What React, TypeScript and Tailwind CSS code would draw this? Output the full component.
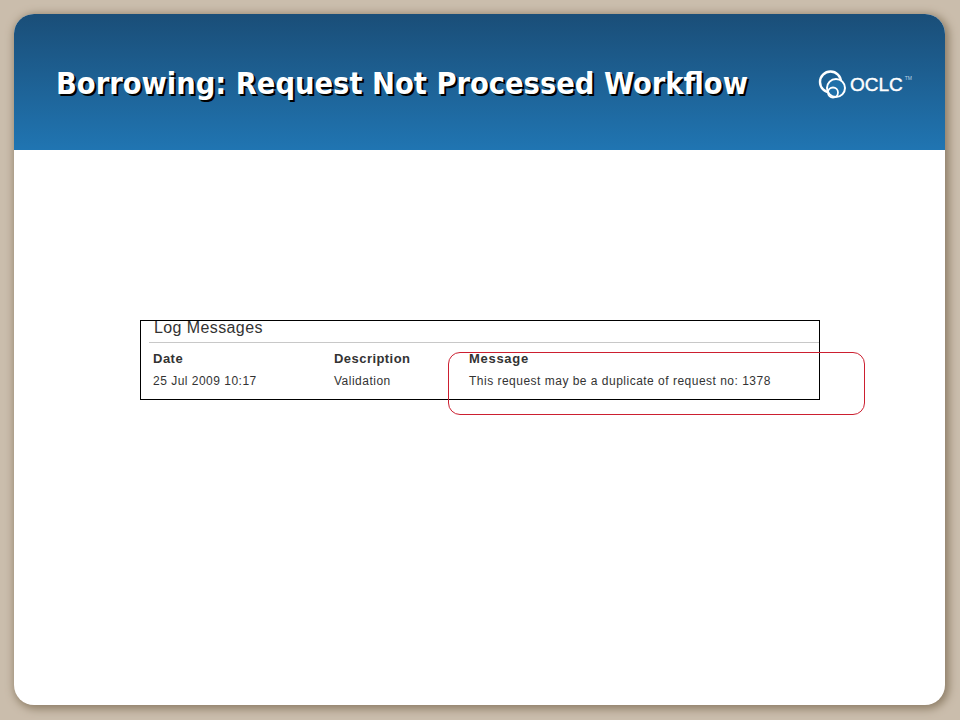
export default function App() {
  return (
    <div className="w-[960px] h-[720px] bg-[#cabdac] pt-[14px] pl-[14px] overflow-hidden">
      <div className="w-[931px] h-[691px] rounded-[20px] bg-white overflow-hidden shadow-[2px_2px_9px_2px_#8f7f68] flex flex-col">
        <header className="h-[136px] shrink-0 bg-gradient-to-b from-[#1a4e78] to-[#2075b2] flex items-start pl-[42px] pr-[33px]">
          <h1 className="mt-[50px] text-[30.45px] leading-[40px] font-bold text-white whitespace-nowrap font-['DejaVu_Sans',sans-serif] [font-stretch:condensed] [text-shadow:2px_2px_0_#000]">
            Borrowing: Request Not Processed Workflow
          </h1>
          <div className="ml-auto mt-[55px] flex items-center gap-[2px]">
            <svg width="30" height="30" viewBox="0 0 30 30" fill="none" stroke="white">
              <circle cx="12.5" cy="13" r="10.5" strokeWidth="2.4" />
              <circle cx="18" cy="19" r="9" strokeWidth="2" fill="#2070a9" />
              <circle cx="15" cy="23.5" r="5" strokeWidth="1.8" />
            </svg>
            <span className="text-[19px] leading-none text-white font-['Liberation_Sans',sans-serif] [-webkit-text-stroke:0.4px_white]">OCLC</span>
            <span className="self-start mt-[7px] text-[5px] leading-none text-[#b9d3e6] font-['Liberation_Sans',sans-serif]">TM</span>
          </div>
        </header>
        <main className="relative flex-1 pl-[126px] pt-[170px] font-['Liberation_Sans',sans-serif] text-[#333]">
          <section className="w-[680px] h-[80px] border border-black pl-[8px] flex flex-col">
            <h2 className="pl-[5px] text-[16px] leading-[14px] tracking-[0.4px] text-[#333]">Log Messages</h2>
            <div className="mt-[7px] border-t border-[#c8c8c8]" />
            <div className="pl-[4px] mt-[8px] grid grid-cols-[181px_135px_1fr] text-[12px] leading-[15px] tracking-[0.49px]">
              <div className="font-bold text-[13px] tracking-[0.5px]">Date</div>
              <div className="font-bold text-[13px] tracking-[0.45px]">Description</div>
              <div className="font-bold text-[13px] tracking-[0.7px]">Message</div>
              <div className="mt-[8px]">25 Jul 2009 10:17</div>
              <div className="mt-[8px]">Validation</div>
              <div className="mt-[8px]">This request may be a duplicate of request no: 1378</div>
            </div>
          </section>
          <div className="absolute left-[434px] top-[202px] w-[417px] h-[63px] rounded-[12px] border-[1.5px] border-[#cc1f30]" />
        </main>
      </div>
    </div>
  );
}
